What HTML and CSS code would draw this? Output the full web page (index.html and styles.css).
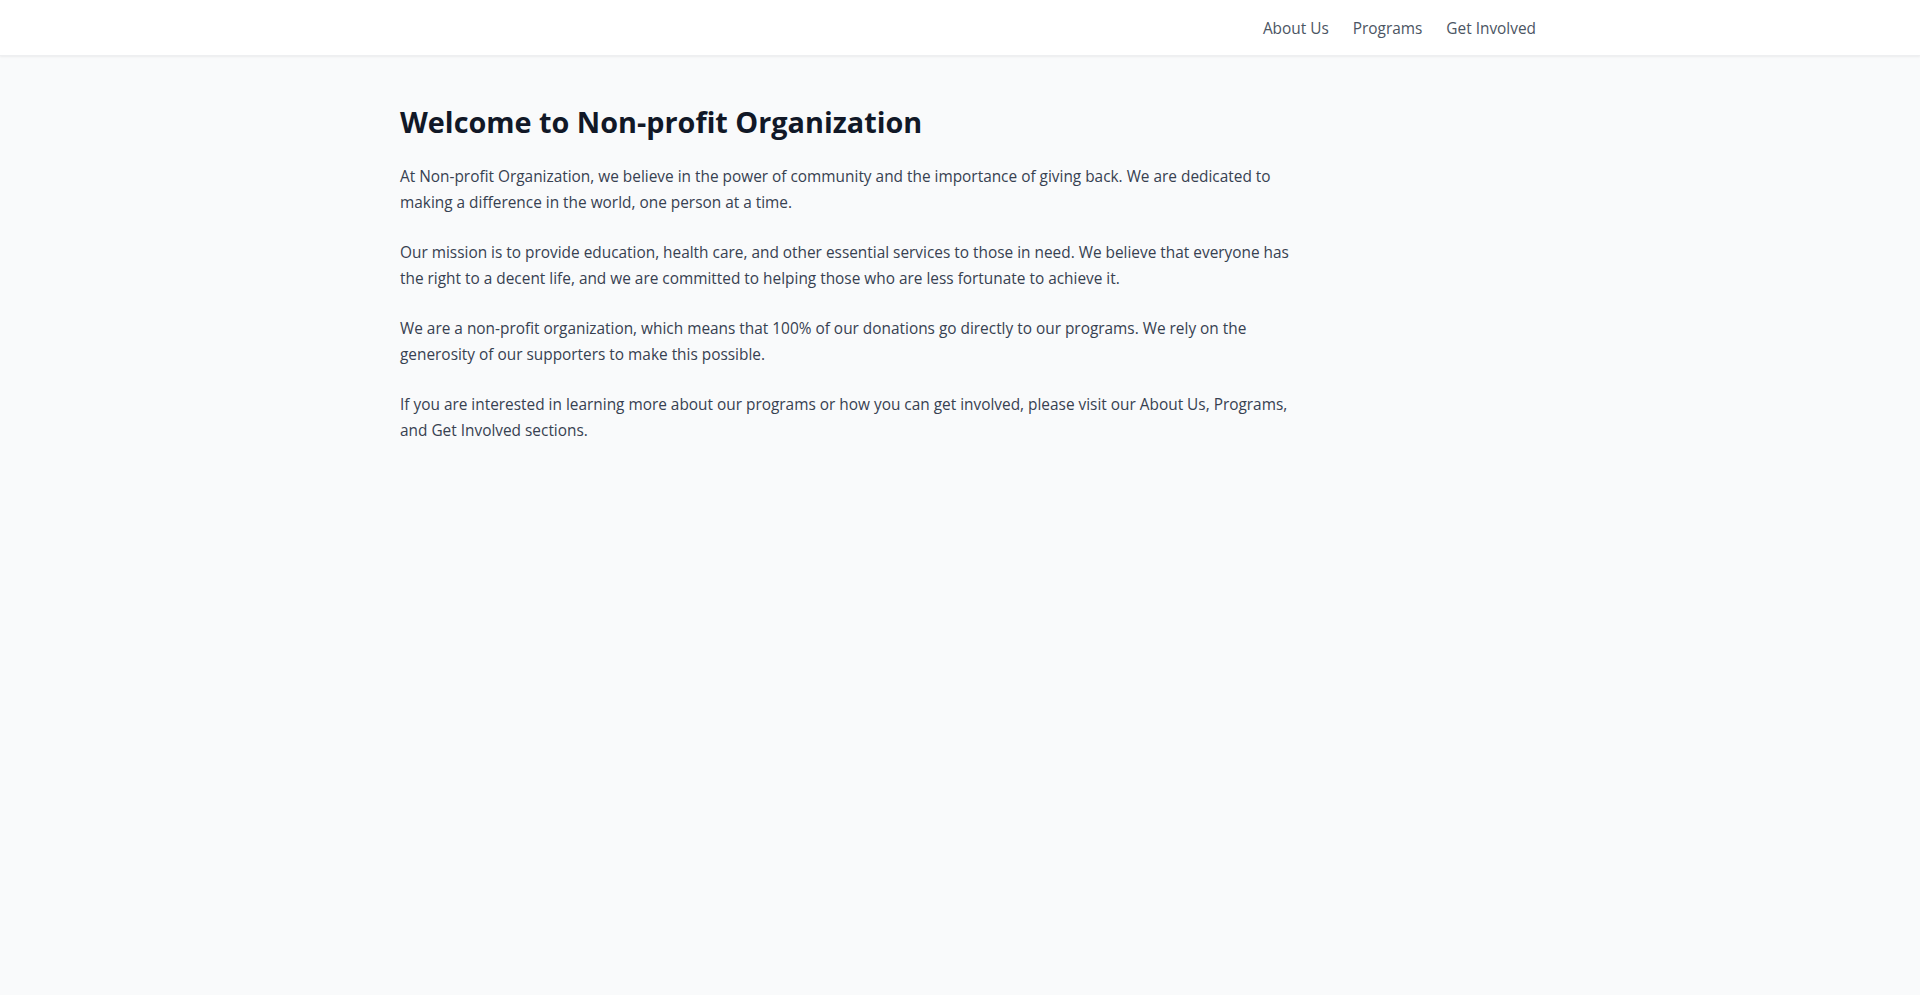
FILE: index.html
```html
<!DOCTYPE html>
<html lang="en">
<head>
<meta charset="utf-8">
<title>Non-profit Organization</title>
<link rel="stylesheet" href="styles.css">
</head>
<body>
<header class="site-header">
  <div class="header-inner">
    <nav class="nav">
      <a href="#" class="nav-link">About Us</a>
      <a href="#" class="nav-link">Programs</a>
      <a href="#" class="nav-link">Get Involved</a>
    </nav>
  </div>
</header>
<main class="main">
  <div class="content">
    <h1 class="title">Welcome to Non-profit Organization</h1>
    <p class="para">At Non-profit Organization, we believe in the power of community and the importance of giving back. We are dedicated to making a difference in the world, one person at a time.</p>
    <p class="para">Our mission is to provide education, health care, and other essential services to those in need. We believe that everyone has the right to a decent life, and we are committed to helping those who are less fortunate to achieve it.</p>
    <p class="para">We are a non-profit organization, which means that 100% of our donations go directly to our programs. We rely on the generosity of our supporters to make this possible.</p>
    <p class="para">If you are interested in learning more about our programs or how you can get involved, please visit our About Us, Programs, and Get Involved sections.</p>
  </div>
</main>
</body>
</html>
```
FILE: styles.css
```css
* { box-sizing: border-box; }
html, body { margin: 0; padding: 0; }
body {
  font-family: "Open Sans", "Noto Sans", sans-serif;
  background: #f9fafb;
  min-height: 995px;
  color: #374151;
}
.site-header {
  background: #ffffff;
  box-shadow: 0 1px 2px rgba(0,0,0,0.06);
  border-bottom: 1px solid #eeeff1;
}
.header-inner {
  max-width: 1152px;
  margin: 0 auto;
  height: 55px;
  display: flex;
  justify-content: flex-end;
  align-items: center;
}
.nav { display: flex; gap: 24px; padding-top: 2px; }
.nav-link {
  color: #4b5563;
  text-decoration: none;
  font-size: 15.4px;
  line-height: 24px;
}
.main {
  max-width: 1152px;
  margin: 0 auto;
  padding: 48px 16px;
}
.content { max-width: 896px; }
.title {
  margin: 0 0 24px;
  font-size: 28.8px;
  line-height: 36px;
  font-weight: 700;
  color: #111827;
}
.para {
  margin: 0 0 24px;
  font-size: 15.4px;
  line-height: 26px;
  color: #374151;
}
```
